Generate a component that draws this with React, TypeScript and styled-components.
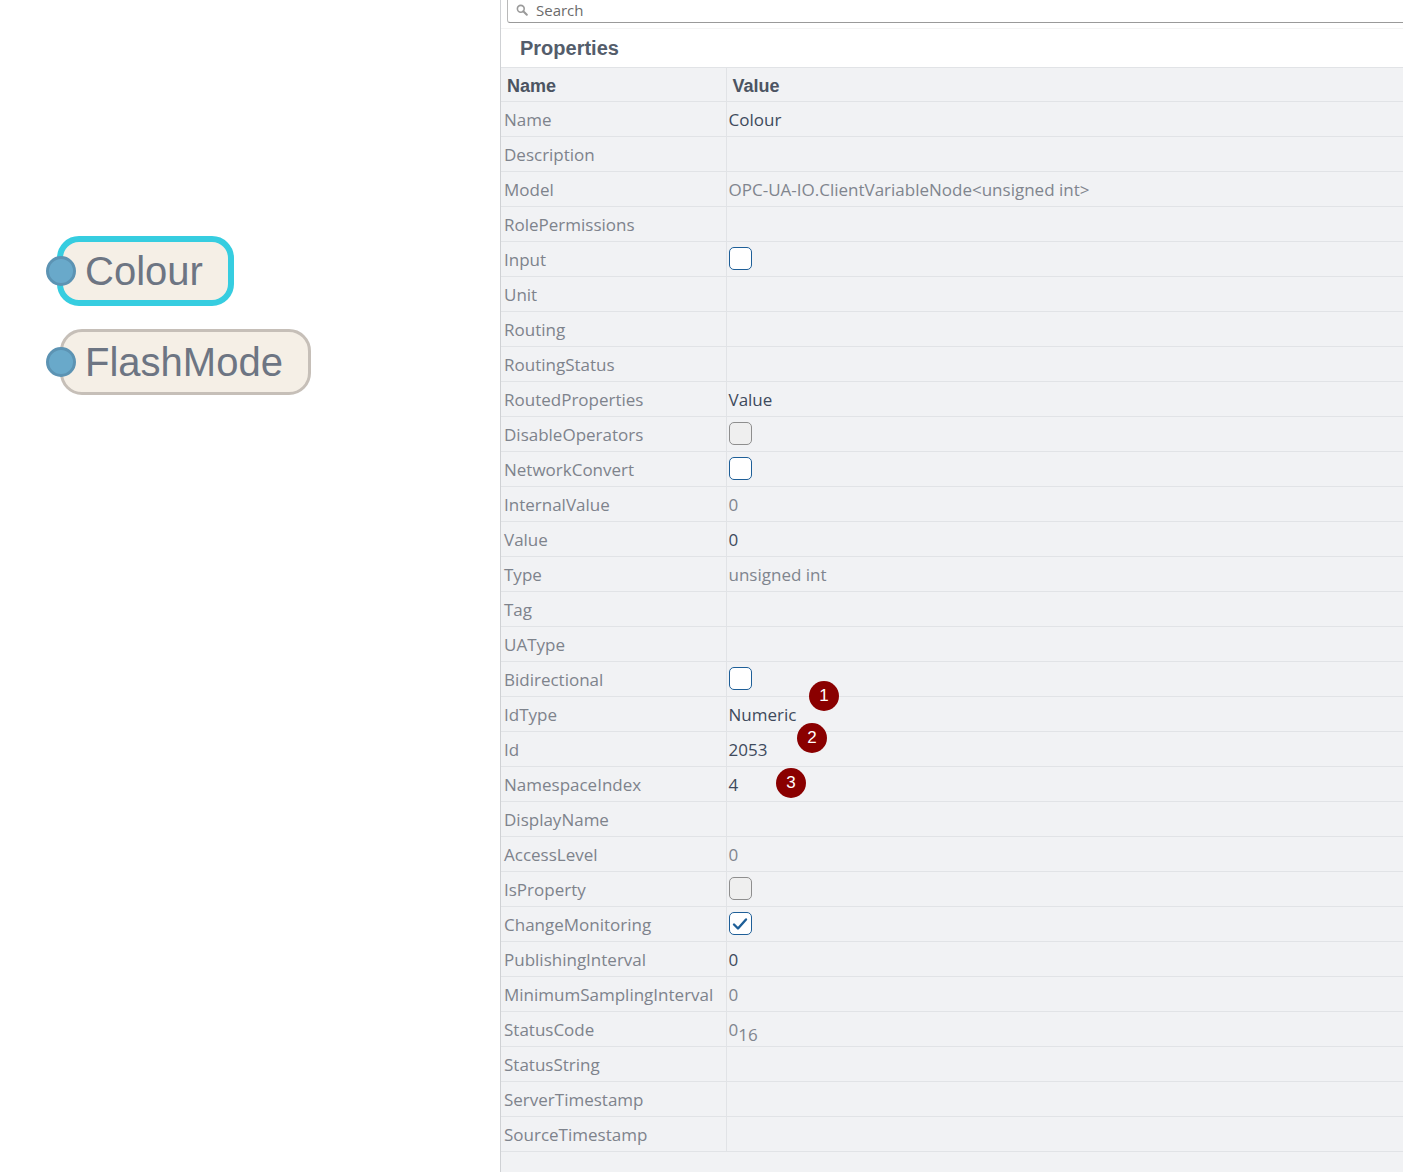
import React from "react";
import styled, { createGlobalStyle } from "styled-components";

const GlobalStyle = createGlobalStyle`
  html, body {
    margin: 0;
    padding: 0;
    background: #ffffff;
    overflow: hidden;
  }
  body {
    font-family: "Open Sans", "Noto Sans", sans-serif;
  }
`;

const Page = styled.div`
  display: grid;
  grid-template-columns: 500px 1fr;
  height: 1172px;
  overflow: hidden;
`;

const Canvas = styled.div`
  position: relative;
  background: #ffffff;
`;

const Node = styled.div<{ $selected?: boolean; $x: number; $y: number; $w: number; $h: number }>`
  position: absolute;
  left: ${(p) => p.$x}px;
  top: ${(p) => p.$y}px;
  width: ${(p) => p.$w}px;
  height: ${(p) => p.$h}px;
  box-sizing: border-box;
  border-radius: 22px;
  background: #f5efe6;
  border: ${(p) => (p.$selected ? "6px solid #36cde0" : "3px solid #c6bfb8")};
  display: flex;
  align-items: center;
  padding-left: 22px;
  font-family: "Liberation Sans", Arial, sans-serif;
  font-size: 40px;
  color: #6d7583;
`;

/* port sits on a shared x (centre at 61px on the canvas) whatever the node border */
const Port = styled.span<{ $offset: number }>`
  position: absolute;
  left: ${(p) => p.$offset}px;
  top: 50%;
  width: 30px;
  height: 30px;
  margin-top: -15px;
  box-sizing: border-box;
  border-radius: 50%;
  background: #69a9ca;
  border: 3px solid #5c93b3;
`;

const Panel = styled.div`
  position: relative;
  border-left: 1px solid #cfd1d4;
  background: #f1f2f4;
  display: flex;
  flex-direction: column;
  overflow: hidden;
`;

const SearchBar = styled.div`
  background: #ffffff;
  padding: 0 0 5px 6px;
  margin-right: -12px;
  border-bottom: 1px solid #f4f4f4;
`;

const SearchInput = styled.div`
  height: 23px;
  box-sizing: border-box;
  border: 1px solid #b9b9b9;
  border-top: none;
  border-bottom-color: #9a9a9a;
  border-radius: 0 0 3px 3px;
  display: flex;
  align-items: center;
  gap: 8px;
  padding-left: 8px;
  padding-bottom: 2px;
  font-size: 15px;
  color: #6b6b6b;
`;

const Title = styled.div`
  background: #ffffff;
  height: 38px;
  box-sizing: border-box;
  padding-left: 19px;
  display: flex;
  align-items: center;
  font-family: "Liberation Sans", Arial, sans-serif;
  font-weight: 700;
  font-size: 20px;
  color: #545d6b;
`;

const Table = styled.table`
  width: 100%;
  border-collapse: collapse;
  table-layout: fixed;
  border-top: 1px solid #e1e3e6;
`;

const Th = styled.th`
  height: 34px;
  box-sizing: border-box;
  text-align: left;
  padding: 3px 0 0 6px;
  font-family: "Liberation Sans", Arial, sans-serif;
  font-weight: 700;
  font-size: 18px;
  color: #4c5462;
  border-bottom: 1px solid #e1e3e6;
  border-right: 1px solid #e1e3e6;
  &:last-child {
    border-right: none;
  }
`;

const Td = styled.td<{ $tone?: "label" | "dark" | "muted" }>`
  height: 35px;
  box-sizing: border-box;
  padding: 1px 0 0 ${(p) => (p.$tone === "label" ? 3 : 2)}px;
  white-space: nowrap;
  font-size: 17px;
  color: ${(p) => (p.$tone === "dark" ? "#3e4a5c" : p.$tone === "muted" ? "#80858e" : "#7e838c")};
  border-bottom: 1px solid #e1e3e6;
  border-right: 1px solid #e1e3e6;
  &:last-child {
    border-right: none;
  }
`;

const Check = styled.span<{ $disabled?: boolean }>`
  display: inline-flex;
  align-items: center;
  justify-content: center;
  vertical-align: middle;
  width: 23px;
  height: 23px;
  margin-top: -5px;
  box-sizing: border-box;
  border-radius: 5px;
  background: ${(p) => (p.$disabled ? "#efefef" : "#ffffff")};
  border: 1.5px solid ${(p) => (p.$disabled ? "#8e8e8e" : "#1e5f98")};
`;

const Sub = styled.span`
  position: relative;
  top: 5px;
  font-size: 17px;
`;

const Badge = styled.span<{ $x: number; $y: number }>`
  position: absolute;
  left: ${(p) => p.$x}px;
  top: ${(p) => p.$y}px;
  width: 30px;
  height: 30px;
  border-radius: 50%;
  background: #8a0000;
  color: #ffffff;
  font-family: "Liberation Sans", Arial, sans-serif;
  font-size: 17px;
  display: flex;
  align-items: center;
  justify-content: center;
`;

type Row = {
  name: string;
  value?: string;
  kind?: "dark" | "muted" | "check" | "off" | "checked" | "hex";
};

const rows: Row[] = [
  { name: "Name", value: "Colour", kind: "dark" },
  { name: "Description" },
  { name: "Model", value: "OPC-UA-IO.ClientVariableNode<unsigned int>", kind: "muted" },
  { name: "RolePermissions" },
  { name: "Input", kind: "check" },
  { name: "Unit" },
  { name: "Routing" },
  { name: "RoutingStatus" },
  { name: "RoutedProperties", value: "Value", kind: "dark" },
  { name: "DisableOperators", kind: "off" },
  { name: "NetworkConvert", kind: "check" },
  { name: "InternalValue", value: "0", kind: "muted" },
  { name: "Value", value: "0", kind: "dark" },
  { name: "Type", value: "unsigned int", kind: "muted" },
  { name: "Tag" },
  { name: "UAType" },
  { name: "Bidirectional", kind: "check" },
  { name: "IdType", value: "Numeric", kind: "dark" },
  { name: "Id", value: "2053", kind: "dark" },
  { name: "NamespaceIndex", value: "4", kind: "dark" },
  { name: "DisplayName" },
  { name: "AccessLevel", value: "0", kind: "muted" },
  { name: "IsProperty", kind: "off" },
  { name: "ChangeMonitoring", kind: "checked" },
  { name: "PublishingInterval", value: "0", kind: "dark" },
  { name: "MinimumSamplingInterval", value: "0", kind: "muted" },
  { name: "StatusCode", value: "0", kind: "hex" },
  { name: "StatusString" },
  { name: "ServerTimestamp" },
  { name: "SourceTimestamp" },
];

const renderValue = (row: Row) => {
  switch (row.kind) {
    case "check":
      return <Check />;
    case "off":
      return <Check $disabled />;
    case "checked":
      return (
        <Check>
          <svg width="16" height="14" viewBox="0 0 16 14">
            <path d="M2 7.5 L6 11.5 L14 2.5" fill="none" stroke="#1e5f98" strokeWidth="2.4" strokeLinecap="round" strokeLinejoin="round" />
          </svg>
        </Check>
      );
    case "hex":
      return (
        <>
          {row.value}
          <Sub>16</Sub>
        </>
      );
    default:
      return row.value ?? "";
  }
};

const App: React.FC = () => {
  return (
    <>
      <GlobalStyle />
      <Page>
        <Canvas>
          <Node $selected $x={57} $y={236} $w={177} $h={70}>
            <Port $offset={-17} />
            Colour
          </Node>
          <Node $x={60} $y={329} $w={251} $h={66}>
            <Port $offset={-17} />
            FlashMode
          </Node>
        </Canvas>
        <Panel>
          <SearchBar>
            <SearchInput>
              <svg width="12" height="12" viewBox="0 0 12 12">
                <circle cx="4.8" cy="4.8" r="3.4" fill="none" stroke="#9a9a9a" strokeWidth="1.6" />
                <path d="M7.3 7.3 L10.8 10.8" stroke="#9a9a9a" strokeWidth="2" strokeLinecap="round" />
              </svg>
              Search
            </SearchInput>
          </SearchBar>
          <Title>Properties</Title>
          <Table>
            <colgroup>
              <col style={{ width: 225 }} />
              <col />
            </colgroup>
            <thead>
              <tr>
                <Th>Name</Th>
                <Th>Value</Th>
              </tr>
            </thead>
            <tbody>
              {rows.map((row) => (
                <tr key={row.name}>
                  <Td $tone="label">{row.name}</Td>
                  <Td $tone={row.kind === "dark" ? "dark" : "muted"}>{renderValue(row)}</Td>
                </tr>
              ))}
            </tbody>
          </Table>
          <Badge $x={308} $y={681}>1</Badge>
          <Badge $x={296} $y={723}>2</Badge>
          <Badge $x={275} $y={768}>3</Badge>
        </Panel>
      </Page>
    </>
  );
};

export default App;
